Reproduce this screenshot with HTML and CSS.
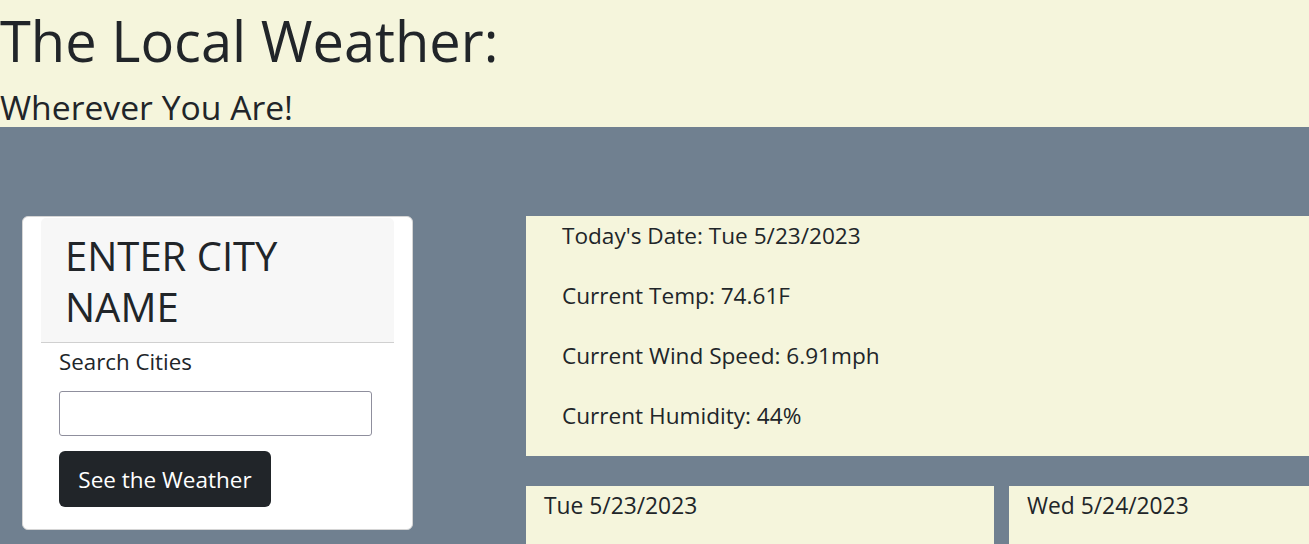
FILE: index.html
```html
<!DOCTYPE html>
<html>
<head>
<meta charset="utf-8">
<title>The Local Weather</title>
<link rel="stylesheet" href="styles.css">
</head>
<body>
<header class="site-header">
  <h1 class="title">The Local Weather:</h1>
  <h2 class="subtitle">Wherever You Are!</h2>
</header>
<main class="main">
  <section class="search-card">
    <div class="search-head"><h3 class="search-title">ENTER CITY NAME</h3></div>
    <div class="search-body">
      <label class="search-label" for="city">Search Cities</label>
      <input class="search-input" id="city" type="text">
      <button class="search-btn" type="button">See the Weather</button>
    </div>
  </section>
  <section class="weather">
    <div class="current">
      <p class="cur-line">Today's Date: Tue 5/23/2023</p>
      <p class="cur-line">Current Temp: 74.61F</p>
      <p class="cur-line">Current Wind Speed: 6.91mph</p>
      <p class="cur-line">Current Humidity: 44%</p>
    </div>
    <div class="forecast">
      <div class="day-card"><p class="day-date">Tue 5/23/2023</p></div>
      <div class="day-card"><p class="day-date">Wed 5/24/2023</p></div>
    </div>
  </section>
</main>
</body>
</html>
```
FILE: styles.css
```css
* { box-sizing: border-box; }
html, body { margin: 0; padding: 0; }
body {
  font-family: "Open Sans", "Noto Sans", sans-serif;
  color: #212529;
  background: #708090;
  height: 544px;
  overflow: hidden;
}
.site-header {
  background: #f5f5dc;
  height: 127px;
}
.title { margin: 0; font-size: 56px; font-weight: 400; line-height: 80px; white-space: nowrap; }
.subtitle { margin: 0; font-size: 33.7px; font-weight: 400; line-height: 54px; height: 47px; white-space: nowrap; }
.main {
  display: flex;
  align-items: flex-start;
  padding: 89px 0 0 22px;
}
.search-card {
  width: 391px;
  flex: none;
  background: #fff;
  border: 1px solid #d5d5d5;
  border-radius: 6px;
  padding: 1px 18px 22px 18px;
}
.search-head {
  background: #f7f7f7;
  border-bottom: 1px solid #d0d0d0;
  border-radius: 5px 5px 0 0;
  padding: 12px 24px 10px;
}
.search-title { margin: 0; font-size: 40px; font-weight: 400; line-height: 51px; max-width: 250px; }
.search-body { padding: 0 0 0 18px; display: flex; flex-direction: column; align-items: flex-start; }
.search-label { font-size: 22.3px; line-height: 30px; margin-top: 4px; }
.search-input {
  margin-top: 14px;
  width: 313px;
  height: 45px;
  border: 1px solid #8f8f9d;
  border-radius: 3px;
  background: #fff;
}
.search-btn {
  margin-top: 15px;
  height: 56px;
  width: 212px;
  padding: 4px 0 2px;
  border: 0;
  border-radius: 6px;
  background: #212529;
  color: #fff;
  font-family: inherit;
  font-size: 22.5px;
  line-height: 50px;
  text-align: center;
}
.weather { margin-left: 113px; flex: 1; min-width: 0; overflow: hidden; }
.current {
  background: #f5f5dc;
  height: 240px;
  padding: 5px 0 0 36px;
}
.cur-line { margin: 0 0 30px; font-size: 22.6px; line-height: 30px; white-space: nowrap; }
.forecast { display: flex; gap: 15px; margin-top: 30px; }
.day-card { background: #f5f5dc; width: 468px; height: 80px; padding: 5px 18px; flex: none; }
.day-date { margin: 0; font-size: 22.8px; line-height: 30px; white-space: nowrap; }
```
